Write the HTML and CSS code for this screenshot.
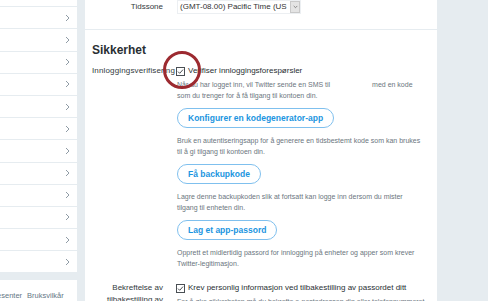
FILE: index.html
```html
<!DOCTYPE html>
<html lang="no">
<head>
<meta charset="utf-8">
<title>Sikkerhet</title>
<link rel="stylesheet" href="styles.css">
</head>
<body>
<div class="page">
  <aside class="sidebar">
    <ul class="menu">
      <li class="menu-item"><svg class="chev" viewBox="0 0 5 8"><path d="M1 1l3 3-3 3"/></svg></li>
      <li class="menu-item"><svg class="chev" viewBox="0 0 5 8"><path d="M1 1l3 3-3 3"/></svg></li>
      <li class="menu-item"><svg class="chev" viewBox="0 0 5 8"><path d="M1 1l3 3-3 3"/></svg></li>
      <li class="menu-item"><svg class="chev" viewBox="0 0 5 8"><path d="M1 1l3 3-3 3"/></svg></li>
      <li class="menu-item"><svg class="chev" viewBox="0 0 5 8"><path d="M1 1l3 3-3 3"/></svg></li>
      <li class="menu-item"><svg class="chev" viewBox="0 0 5 8"><path d="M1 1l3 3-3 3"/></svg></li>
      <li class="menu-item"><svg class="chev" viewBox="0 0 5 8"><path d="M1 1l3 3-3 3"/></svg></li>
      <li class="menu-item"><svg class="chev" viewBox="0 0 5 8"><path d="M1 1l3 3-3 3"/></svg></li>
      <li class="menu-item"><svg class="chev" viewBox="0 0 5 8"><path d="M1 1l3 3-3 3"/></svg></li>
      <li class="menu-item"><svg class="chev" viewBox="0 0 5 8"><path d="M1 1l3 3-3 3"/></svg></li>
      <li class="menu-item"><svg class="chev" viewBox="0 0 5 8"><path d="M1 1l3 3-3 3"/></svg></li>
      <li class="menu-item"><svg class="chev" viewBox="0 0 5 8"><path d="M1 1l3 3-3 3"/></svg></li>
      <li class="menu-item"><svg class="chev" viewBox="0 0 5 8"><path d="M1 1l3 3-3 3"/></svg></li>
    </ul>
    <div class="footer-card">
      <p class="footer-links"><span>Hjelpesenter</span><span>Bruksvilkår</span></p>
    </div>
  </aside>

  <main class="main">
    <section class="section-top">
      <div class="form-row">
        <div class="label">Tidssone</div>
        <div class="control">
          <div class="select">
            <span class="select-text">(GMT-08.00) Pacific Time (US &amp; Canada)</span>
            <span class="select-arrow"><svg viewBox="0 0 7 5"><path d="M1 1l2.5 2.5L6 1"/></svg></span>
          </div>
        </div>
      </div>
    </section>

    <section class="section">
      <h2 class="heading">Sikkerhet</h2>

      <div class="form-row">
        <div class="label label-long">Innloggingsverifisering</div>
        <div class="control">
          <label class="check">
            <span class="box-wrap">
              <svg class="box" viewBox="0 0 9 9"><rect x="0.5" y="0.5" width="8" height="8"/><path d="M2 4.6l1.7 1.7L7 2.6"/></svg>
              <span class="annotation"></span>
            </span>
            Verifiser innloggingsforespørsler
          </label>
          <p class="desc">Når du har logget inn, vil Twitter sende en SMS til <span class="redacted"></span> med en kode som du trenger for å få tilgang til kontoen din.</p>
          <button class="btn" type="button">Konfigurer en kodegenerator-app</button>
          <p class="desc">Bruk en autentiseringsapp for å generere en tidsbestemt kode som kan brukes til å gi tilgang til kontoen din.</p>
          <button class="btn" type="button">Få backupkode</button>
          <p class="desc">Lagre denne backupkoden slik at fortsatt kan logge inn dersom du mister tilgang til enheten din.</p>
          <button class="btn" type="button">Lag et app-passord</button>
          <p class="desc">Opprett et midlertidig passord for innlogging på enheter og apper som krever Twitter-legitimasjon.</p>
        </div>
      </div>

      <div class="form-row form-row-next">
        <div class="label label-multi">Bekreftelse av tilbakestilling av passord</div>
        <div class="control">
          <label class="check">
            <span class="box-wrap">
              <svg class="box" viewBox="0 0 9 9"><rect x="0.5" y="0.5" width="8" height="8"/><path d="M2 4.6l1.7 1.7L7 2.6"/></svg>
            </span>
            Krev personlig informasjon ved tilbakestilling av passordet ditt
          </label>
          <p class="desc">For å øke sikkerheten må du bekrefte e-postadressen din eller telefonnummeret ditt.</p>
        </div>
      </div>
    </section>
  </main>
</div>
</body>
</html>
```

FILE: styles.css
```css
* {
  box-sizing: border-box;
  margin: 0;
  padding: 0;
}

html,
body {
  height: 100%;
  overflow: hidden;
}

body {
  background: #e6ecf0;
  font-family: "Liberation Sans", Arial, sans-serif;
  color: #292f33;
}

.page {
  display: flex;
  align-items: flex-start;
  gap: 8px;
}

/* ---------- left menu ---------- */
.sidebar {
  width: 77px;
  flex: none;
  margin-top: -15px;
  display: flex;
  flex-direction: column;
  gap: 7px;
}

.menu {
  list-style: none;
  background: #fff;
}

.menu-item {
  height: 22.2px;
  border-bottom: 1px solid #e6ecf0;
  display: flex;
  align-items: center;
  justify-content: flex-end;
  padding-right: 7px;
}

.chev {
  width: 5px;
  height: 8px;
  fill: none;
  stroke: #8f9ba5;
  stroke-width: 1;
}

.footer-card {
  background: #fff;
  height: 40px;
  overflow: hidden;
  padding-top: 11px;
}

.footer-links {
  display: flex;
  gap: 5px;
  margin-left: -20px;
  font-size: 7.5px;
  line-height: 9px;
  color: #657786;
  white-space: nowrap;
}

/* ---------- main card ---------- */
.main {
  width: 352px;
  flex: none;
  background: #fff;
  min-height: 330px;
}

.section-top {
  padding: 0 12px 15px 7px;
  border-bottom: 1px solid #e6ecf0;
}

.section {
  padding: 12px 12px 0 7px;
}

.heading {
  font-size: 12px;
  line-height: 16px;
  font-weight: bold;
  color: #292f33;
  margin-bottom: 6px;
}

.form-row {
  display: grid;
  grid-template-columns: 71px 248px;
  column-gap: 14px;
  align-items: start;
}

.form-row-next {
  margin-top: 12px;
}

.section-top .form-row {
  align-items: center;
}

.label {
  text-align: right;
  font-size: 8px;
  line-height: 14px;
  color: #333a40;
  white-space: nowrap;
}

.label-long {
  text-align: left;
  letter-spacing: 0.15px;
}

.label-multi {
  white-space: normal;
  line-height: 12px;
  padding-top: 1px;
}

/* select */
.select {
  display: flex;
  align-items: center;
  gap: 2px;
  width: 124px;
  height: 14px;
  border: 1px solid #eceff2;
}

.select-text {
  flex: 1;
  overflow: hidden;
  white-space: nowrap;
  padding-left: 2px;
  font-size: 8px;
  line-height: 12px;
  color: #333;
}

.select-arrow {
  width: 10px;
  height: 12px;
  flex: none;
  background: #e4e4e4;
  border: 1px solid #c9c9c9;
  display: flex;
  align-items: center;
  justify-content: center;
}

.select-arrow svg {
  width: 5px;
  height: 4px;
  fill: none;
  stroke: #666;
  stroke-width: 1;
}

/* checkbox rows */
.check {
  display: flex;
  align-items: center;
  gap: 3px;
  height: 14px;
  font-size: 8px;
  line-height: 14px;
  color: #292f33;
  white-space: nowrap;
}

.box-wrap {
  position: relative;
  display: flex;
  margin-left: -1px;
}

.box {
  width: 9px;
  height: 9px;
  fill: none;
  stroke: #4a4f54;
  stroke-width: 1;
}

.annotation {
  position: absolute;
  left: -13.5px;
  top: -15.5px;
  width: 38px;
  height: 38px;
  border: 3px solid #9c2a30;
  border-radius: 50%;
}

.desc {
  margin-top: 1px;
  font-size: 7px;
  line-height: 11px;
  color: #6b757e;
}

.btn + .desc {
  margin-top: 0;
}

.redacted {
  display: inline-block;
  width: 38px;
}

.btn {
  display: block;
  height: 20px;
  margin: 7px 0;
  padding: 0 10px;
  border: 1px solid #7fc0ee;
  border-radius: 10px;
  background: #fff;
  color: #1b95e0;
  font-family: "Liberation Sans", Arial, sans-serif;
  font-size: 8.5px;
  font-weight: bold;
  line-height: 18px;
}
```
